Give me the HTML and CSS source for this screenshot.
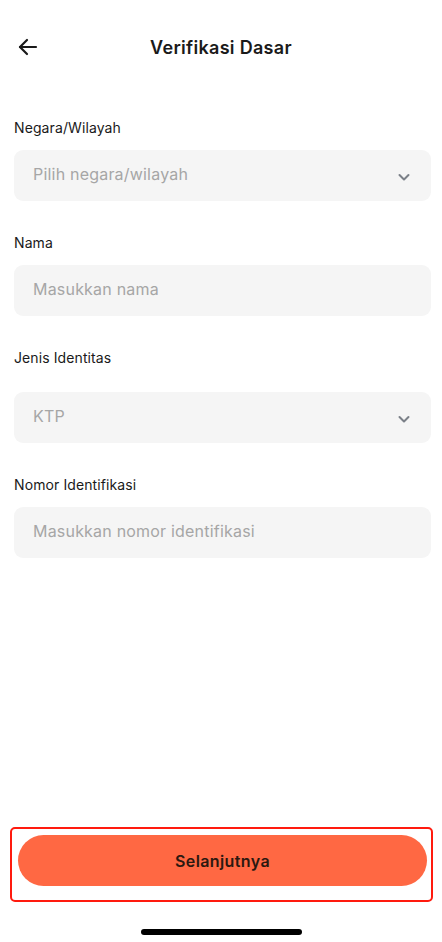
FILE: index.html
```html
<!DOCTYPE html>
<html lang="id">
<head>
    <meta charset="UTF-8">
    <meta name="viewport" content="width=device-width, initial-scale=1.0">
    <title>Verifikasi Dasar</title>
    <link rel="stylesheet" href="styles.css">
</head>
<body>
    <div class="page">
        <header class="topbar">
            <button class="back" aria-label="Kembali">
                <svg width="24" height="24" viewBox="0 0 24 24" fill="none" stroke="#1a1a1a" stroke-width="2.2" stroke-linecap="round" stroke-linejoin="round">
                    <path d="M20 12H4"/>
                    <path d="M11 5l-7 7 7 7"/>
                </svg>
            </button>
            <h1>Verifikasi Dasar</h1>
        </header>

        <form class="form">
            <label class="label">Negara/Wilayah</label>
            <div class="field select">
                <span class="placeholder">Pilih negara/wilayah</span>
                <svg class="chevron" width="14" height="14" viewBox="0 0 14 14" fill="none" stroke="#7b8088" stroke-width="2" stroke-linecap="round" stroke-linejoin="round">
                    <path d="M2.5 5l4.5 4.5L11.5 5"/>
                </svg>
            </div>

            <label class="label">Nama</label>
            <div class="field">
                <span class="placeholder">Masukkan nama</span>
            </div>

            <label class="label label-wide">Jenis Identitas</label>
            <div class="field select">
                <span class="placeholder">KTP</span>
                <svg class="chevron" width="14" height="14" viewBox="0 0 14 14" fill="none" stroke="#7b8088" stroke-width="2" stroke-linecap="round" stroke-linejoin="round">
                    <path d="M2.5 5l4.5 4.5L11.5 5"/>
                </svg>
            </div>

            <label class="label">Nomor Identifikasi</label>
            <div class="field">
                <span class="placeholder">Masukkan nomor identifikasi</span>
            </div>
        </form>

        <footer class="footer">
            <div class="highlight">
                <button class="next" type="button">Selanjutnya</button>
            </div>
            <div class="home-bar"></div>
        </footer>
    </div>
</body>
</html>
```

FILE: styles.css
```css
body {
    margin: 0;
    font-family: Inter, "Noto Sans", Arial, sans-serif;
    background-color: #fff;
    color: #1a1a1a;
}
.page {
    height: 942px;
    display: flex;
    flex-direction: column;
}
.topbar {
    position: relative;
    height: 50px;
    margin-top: 22px;
    display: flex;
    align-items: center;
    justify-content: center;
}
.topbar h1 {
    margin: 0;
    font-size: 18px;
    font-weight: 600;
    letter-spacing: 0.3px;
}
.back {
    position: absolute;
    left: 16px;
    top: 13px;
    padding: 0;
    border: none;
    background: none;
    display: flex;
}
.form {
    padding: 46px 11px 0 14px;
    display: flex;
    flex-direction: column;
}
.label {
    font-size: 14px;
    line-height: 20px;
    letter-spacing: 0.1px;
    margin-bottom: 12px;
}
.label-wide {
    margin-bottom: 24px;
}
.field {
    height: 51px;
    border-radius: 9px;
    background-color: #f5f5f5;
    display: flex;
    align-items: center;
    justify-content: space-between;
    padding: 0 20px 0 19px;
    margin-bottom: 32px;
    box-sizing: border-box;
}
.placeholder {
    font-size: 16px;
    color: #a6a6a6;
    letter-spacing: 0.2px;
    padding-bottom: 4px;
}
.chevron {
    margin-top: 2px;
}
.footer {
    margin-top: auto;
    display: flex;
    flex-direction: column;
    align-items: center;
    padding-bottom: 7px;
}
.highlight {
    width: 423px;
    height: 75px;
    box-sizing: border-box;
    border: 2px solid #ff1a0e;
    border-radius: 5px;
    padding: 6px 4px 0 6px;
    margin-left: 1px;
}
.next {
    width: 100%;
    height: 51px;
    border: none;
    border-radius: 26px;
    background-color: #ff6843;
    color: #2b1810;
    font-family: inherit;
    font-size: 16px;
    font-weight: 600;
    letter-spacing: 0.4px;
}
.home-bar {
    width: 161px;
    height: 6px;
    border-radius: 3px;
    background-color: #000;
    margin-top: 27px;
}
```
